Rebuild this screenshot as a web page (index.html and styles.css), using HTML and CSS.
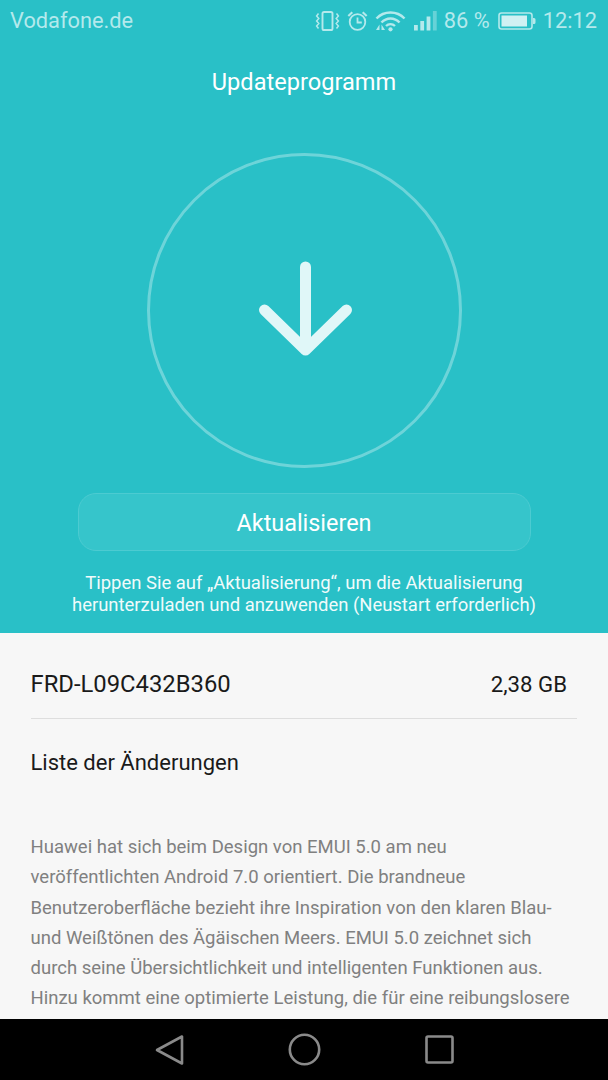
FILE: index.html
```html
<!DOCTYPE html>
<html lang="de">
  <head>
    <meta charset="UTF-8" />
    <title>Updateprogramm</title>
    <link rel="stylesheet" href="styles.css">
  </head>
  <body>
    <div id="app">
      <section class="hero">
        <div class="statusbar">
          <span class="carrier">Vodafone.de</span>
          <div class="status-right">
            <svg class="ico" width="25" height="22" viewBox="0 0 25 22" fill="none" stroke="currentColor" stroke-width="1.9">
              <rect x="7.5" y="2" width="10" height="18" rx="1.6" />
              <path d="M3.5 3.5 L1.6 6 L3.8 8.5 L1.6 11 L3.8 13.5 L1.6 16 L3.5 18.5 M21.5 3.5 L23.4 6 L21.2 8.5 L23.4 11 L21.2 13.5 L23.4 16 L21.5 18.5" stroke-width="1.5" />
            </svg>
            <svg class="ico" width="21" height="22" viewBox="0 0 21 22" fill="none" stroke="currentColor" stroke-width="1.8">
              <circle cx="10.5" cy="12" r="7.8" />
              <path d="M10.5 7.5 V12.5 H14.8" />
              <path d="M1.3 6 L5.3 2.2 M19.7 6 L15.7 2.2" stroke-width="2.1" />
            </svg>
            <svg class="ico" width="31" height="22" viewBox="0 0 31 22" fill="none" stroke="currentColor">
              <path d="M1.5 8.5 C9 0.5 22 0.5 29.5 8.5" stroke-width="2.5" />
              <path d="M6.5 12.5 C11.5 7 19.5 7 24.5 12.5" stroke-width="2.5" />
              <path d="M11 16 C13.5 13.5 17.5 13.5 20 16" stroke-width="2.3" />
              <circle cx="15.5" cy="19.3" r="2.1" fill="currentColor" stroke="none" />
              <path d="M4.5 14.5 L1 20 H4.5 Z M6.5 14.5 L10 20 H6.5 Z" fill="currentColor" stroke="none" />
            </svg>
            <svg class="ico signal" width="25" height="22" viewBox="0 0 25 22">
              <rect x="1" y="15" width="3.8" height="5.5" fill="currentColor" />
              <rect x="7.3" y="11" width="3.8" height="9.5" fill="currentColor" />
              <rect x="13.6" y="6.5" width="3.8" height="14" fill="currentColor" />
              <rect x="19.9" y="1" width="3.8" height="19.5" fill="currentColor" opacity="0.45" />
            </svg>
            <span class="percent">86 %</span>
            <svg class="ico battery" width="38" height="22" viewBox="0 0 38 22">
              <rect x="1" y="3" width="33" height="16" rx="2.5" fill="none" stroke="currentColor" stroke-width="1.6" />
              <rect x="3.5" y="5.5" width="25.5" height="11" fill="#d0f1f3" />
              <path d="M35 8 h1 a1.5 1.5 0 0 1 1.5 1.5 v3 a1.5 1.5 0 0 1 -1.5 1.5 h-1 Z" fill="currentColor" />
            </svg>
            <span class="clock">12:12</span>
          </div>
        </div>

        <h1 class="title">Updateprogramm</h1>

        <div class="ring">
          <svg class="arrow" width="96" height="96" viewBox="0 0 96 96" fill="none" stroke="#e0f7f8" stroke-width="11" stroke-linecap="round" stroke-linejoin="round">
            <path d="M47.5 6 V88" />
            <path d="M6.5 49 L47.5 89 L88.5 49" />
          </svg>
        </div>

        <button class="update-btn">Aktualisieren</button>

        <p class="hint">Tippen Sie auf „Aktualisierung“, um die Aktualisierung<br>herunterzuladen und anzuwenden (Neustart erforderlich)</p>
      </section>

      <section class="details">
        <div class="version-row">
          <span class="version">FRD-L09C432B360</span>
          <span class="size">2,38 GB</span>
        </div>
        <h2 class="changes-title">Liste der Änderungen</h2>
        <p class="changes">Huawei hat sich beim Design von EMUI 5.0 am neu<br>veröffentlichten Android 7.0 orientiert. Die brandneue<br>Benutzeroberfläche bezieht ihre Inspiration von den klaren Blau-<br>und Weißtönen des Ägäischen Meers. EMUI 5.0 zeichnet sich<br>durch seine Übersichtlichkeit und intelligenten Funktionen aus.<br>Hinzu kommt eine optimierte Leistung, die für eine reibungslosere</p>
      </section>

      <nav class="navbar">
        <svg width="30" height="32" viewBox="0 0 30 32" fill="none" stroke="#8a8a8a" stroke-width="2.6" stroke-linejoin="round">
          <path d="M27 2.5 V29.5 L2 16 Z" />
        </svg>
        <svg class="nav-home" width="33" height="33" viewBox="0 0 33 33" fill="none" stroke="#8a8a8a" stroke-width="2.6">
          <circle cx="16.5" cy="16.5" r="14.7" />
        </svg>
        <svg width="29" height="29" viewBox="0 0 29 29" fill="none" stroke="#8a8a8a" stroke-width="2.6" stroke-linejoin="round">
          <rect x="1.5" y="1.5" width="26" height="26" rx="1.5" />
        </svg>
      </nav>
    </div>
  </body>
</html>
```

FILE: styles.css
```css
html {
  background: #f7f7f7;
}

body {
  margin: 0px;
  font-family: Roboto, "Liberation Sans", sans-serif;
}

#app {
  width: 608px;
  height: 1080px;
  display: flex;
  flex-flow: column;
  overflow: hidden;
}

.hero {
  height: 633px;
  flex: none;
  display: flex;
  flex-flow: column;
  align-items: center;
  background-color: #29c0c7;
}

.statusbar {
  width: 100%;
  height: 41px;
  padding: 0 11px 0 10px;
  box-sizing: border-box;
  display: flex;
  align-items: center;
  justify-content: space-between;
  color: #b4e9ec;
  font-size: 21.8px;
}

.status-right {
  display: flex;
  align-items: center;
  gap: 7px;
}

.ico {
  display: block;
}

.percent {
  margin-left: -1px;
}

.battery {
  margin-left: 1px;
}

.title {
  margin: 26px 0 0;
  color: #ffffff;
  font-size: 23.6px;
  line-height: 30px;
  font-weight: 400;
}

.ring {
  width: 315px;
  height: 315px;
  margin-top: 56px;
  box-sizing: border-box;
  display: flex;
  align-items: center;
  justify-content: center;
  border: 3.5px solid rgba(255, 255, 255, 0.32);
  border-radius: 50%;
}

.arrow {
  margin: -4px 0 0 3px;
}

.update-btn {
  width: 453px;
  height: 58px;
  margin-top: 25px;
  padding: 2px 0 0;
  color: #ffffff;
  font-family: inherit;
  font-size: 23.4px;
  background-color: #36c5cb;
  border: 1px solid #4ccbd1;
  border-radius: 18px;
}

.hint {
  margin: 21px 0 0;
  color: #f0fbfb;
  font-size: 18.45px;
  line-height: 22px;
  text-align: center;
}

.details {
  flex: 1;
  min-height: 0;
  padding: 0 31px 0 30.5px;
  background-color: #f7f7f7;
}

.version-row {
  height: 86px;
  padding: 16px 10px 0 0;
  box-sizing: border-box;
  display: flex;
  align-items: center;
  justify-content: space-between;
  border-bottom: 1px solid #dedede;
  color: #1a1a1a;
  font-size: 23.8px;
}

.size {
  font-size: 22.2px;
}

.changes-title {
  margin: 29px 0 0;
  color: #1a1a1a;
  font-size: 22px;
  line-height: 30px;
  font-weight: 400;
}

.changes {
  margin: 54px 0 0;
  color: #808080;
  font-size: 18.5px;
  line-height: 30.3px;
  white-space: nowrap;
}

.navbar {
  height: 61px;
  flex: none;
  padding: 0 154px 0 155px;
  display: flex;
  align-items: center;
  justify-content: space-between;
  background-color: #000000;
}

.nav-home {
  margin-left: -2px;
}
```
